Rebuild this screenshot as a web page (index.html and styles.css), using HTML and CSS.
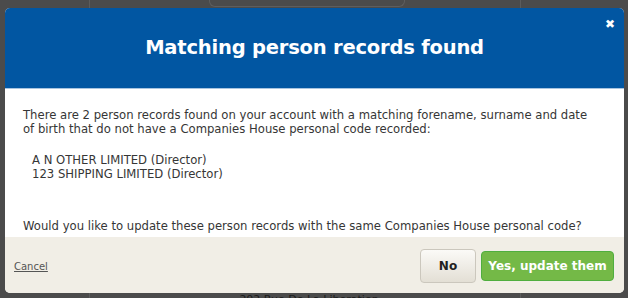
FILE: index.html
```html
<!DOCTYPE html>
<html lang="en">
<head>
    <meta charset="UTF-8">
    <title>Matching person records found</title>
    <link rel="stylesheet" href="styles.css">
</head>
<body>
    <div class="page">
        <div class="page-column">
            <div class="page-tab"></div>
            <div class="page-address">202 Rue De La Liberation</div>
        </div>
    </div>

    <div class="modal">
        <div class="modal-header">
            <h1>Matching person records found</h1>
            <span class="modal-close">&#x2716;</span>
        </div>
        <div class="modal-body">
            <p>There are 2 person records found on your account with a matching forename, surname and date of birth that do not have a Companies House personal code recorded:</p>
            <ul class="record-list">
                <li>A N OTHER LIMITED (Director)</li>
                <li>123 SHIPPING LIMITED (Director)</li>
            </ul>
            <p>Would you like to update these person records with the same Companies House personal code?</p>
        </div>
        <div class="modal-footer">
            <a href="#" class="cancel-link">Cancel</a>
            <div class="actions">
                <button class="btn btn-no">No</button>
                <button class="btn btn-yes">Yes, update them</button>
            </div>
        </div>
    </div>
</body>
</html>
```

FILE: styles.css
```css
* {
    margin: 0;
    padding: 0;
    box-sizing: border-box;
}

body {
    background-color: #4b4b4b;
    font-family: "DejaVu Sans", Verdana, sans-serif;
    width: 628px;
    height: 298px;
    overflow: hidden;
}

.page {
    height: 298px;
    padding-left: 89px;
}

.page-column {
    width: 432px;
    height: 298px;
    border-left: 1px solid #5c5c5c;
    border-right: 1px solid #5c5c5c;
    display: flex;
    flex-direction: column;
    align-items: center;
    justify-content: space-between;
}

.page-tab {
    width: 196px;
    height: 7px;
    margin-left: 4px;
    border: 1px solid #5e5e5e;
    border-top: none;
    border-radius: 0 0 6px 6px;
}

.page-address {
    font-size: 11px;
    line-height: 14px;
    color: #1c1c1c;
    margin-bottom: -9px;
    margin-left: 8px;
}

.modal {
    position: absolute;
    left: 5px;
    top: 8px;
    width: 619px;
    height: 285px;
    background-color: #fff;
    border-radius: 5px;
    overflow: hidden;
    display: flex;
    flex-direction: column;
}

.modal-header {
    position: relative;
    height: 81px;
    background-color: #0156a2;
    display: flex;
    justify-content: center;
    align-items: center;
    border-bottom: 1px solid #a8c4e0;
}

.modal-header h1 {
    color: #fff;
    font-size: 19.5px;
    font-weight: bold;
    margin-top: -2px;
    letter-spacing: -0.2px;
}

.modal-close {
    position: absolute;
    top: 9px;
    right: 9px;
    color: #fff;
    font-size: 12px;
    font-weight: bold;
}

.modal-body {
    flex: 1;
    padding: 19px 28px 0 18px;
    font-size: 11.65px;
    color: #363636;
}

.modal-body p,
.modal-body li {
    line-height: 14px;
}

.record-list {
    list-style: none;
    padding: 17px 0 38px 9px;
}

.modal-footer {
    height: 56px;
    background-color: #f1eee6;
    display: flex;
    justify-content: space-between;
    align-items: center;
    padding: 0 10px 0 9px;
}

.cancel-link {
    font-size: 10px;
    color: #555;
    margin-top: 3px;
}

.actions {
    display: flex;
    align-items: center;
    gap: 5px;
    margin-top: 2px;
}

.btn {
    font-family: "DejaVu Sans", Verdana, sans-serif;
    font-weight: bold;
    font-size: 12px;
    border-radius: 4px;
    cursor: pointer;
}

.btn-no {
    width: 56px;
    height: 34px;
    color: #222;
    background: linear-gradient(#fbfaf7, #e3dfd5);
    border: 1px solid #cbc7bd;
}

.btn-yes {
    width: 133px;
    height: 30px;
    color: #fff;
    background-color: #74b947;
    border: 1px solid #4fae3f;
}
```
